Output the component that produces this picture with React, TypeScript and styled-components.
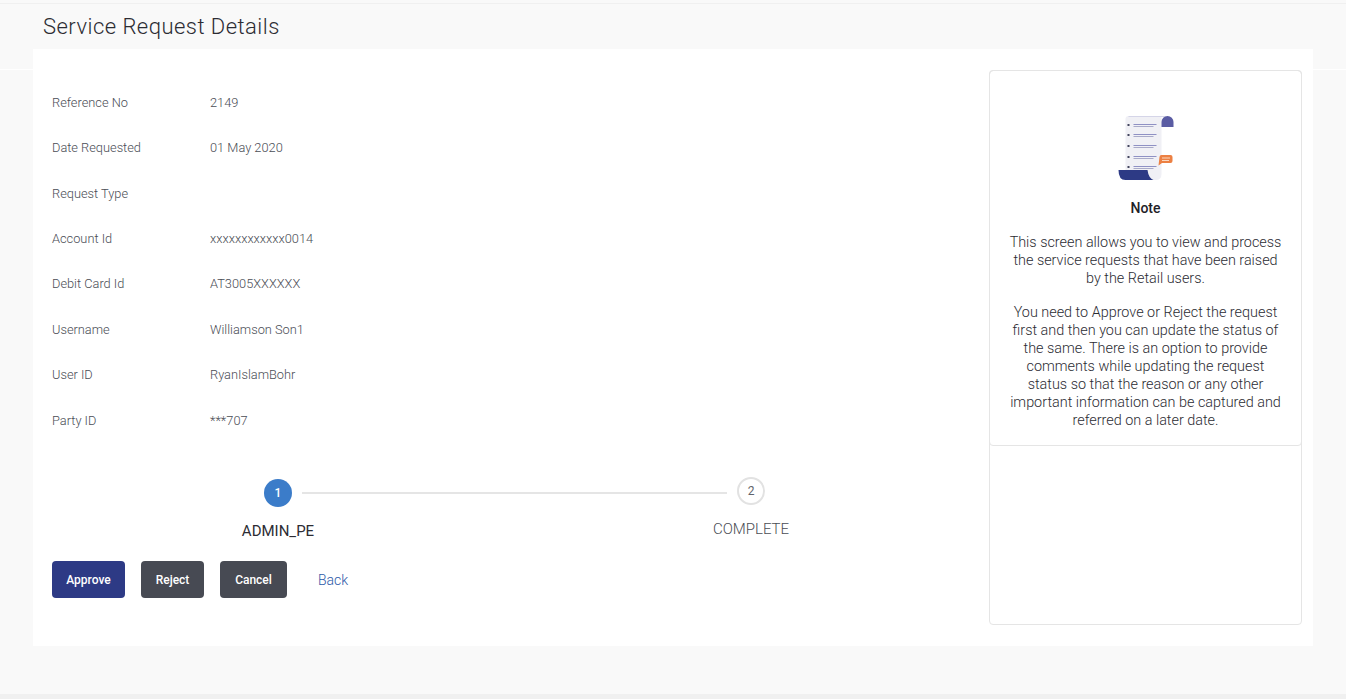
import React from "react";
import styled, { createGlobalStyle } from "styled-components";

const Global = createGlobalStyle`
  html, body { margin: 0; padding: 0; height: 100%; }
  body { font-family: Roboto, "Liberation Sans", sans-serif; font-weight: 300; background: #f9f9f9; overflow: hidden; }
`;

const Page = styled.div`
  height: 699px;
  display: flex;
  flex-direction: column;
  box-sizing: border-box;
  padding-top: 3px;
  background:
    linear-gradient(#f0f0f0, #f0f0f0) 0 3px / 100% 1px no-repeat,
    linear-gradient(#ffffff, #ffffff) 0 69px / 100% 1px no-repeat,
    #f9f9f9;
`;

const Header = styled.header`
  height: 46px;
  flex: none;
  padding-left: 43px;
  display: flex;
  align-items: center;
`;

const Title = styled.h1`
  margin: 0;
  font-size: 22px;
  font-weight: 300;
  color: #2c2c33;
  letter-spacing: 0.47px;
`;

const Panel = styled.main`
  margin: 0 33px;
  height: 597px;
  flex: none;
  background: #fff;
  display: flex;
  box-sizing: border-box;
`;

const Footer = styled.footer`
  margin-top: auto;
  height: 5px;
  flex: none;
  background: #f0f0f0;
`;

const Content = styled.section`
  width: 956px;
  flex: none;
  box-sizing: border-box;
  padding: 30.6px 0 0 19px;
`;

const Rows = styled.dl`
  margin: 0;
`;

const Row = styled.div`
  display: flex;
  height: 45.4px;
  align-items: center;
  font-size: 12.8px;
  color: #4a4d55;
`;

const Label = styled.dt`
  width: 158px;
  flex: none;
`;

const Value = styled.dd`
  margin: 0;
`;

const Stepper = styled.div`
  display: flex;
  margin: 34.2px 0 0 166px;
  width: 600px;
  align-items: flex-start;
`;

const Step = styled.div<{ $top: number }>`
  width: 120px;
  flex: none;
  display: flex;
  flex-direction: column;
  align-items: center;
  padding-top: ${(p) => p.$top}px;
`;

const Circle = styled.div<{ $active?: boolean }>`
  width: 28px;
  height: 28px;
  box-sizing: border-box;
  border-radius: 50%;
  display: flex;
  align-items: center;
  justify-content: center;
  font-size: 12px;
  font-weight: ${(p) => (p.$active ? 500 : 400)};
  color: ${(p) => (p.$active ? "#fff" : "#5f636b")};
  background: ${(p) => (p.$active ? "#3b7cc9" : "#fff")};
  border: ${(p) => (p.$active ? "none" : "2px solid #e2e2e2")};
`;

const StepLabel = styled.div<{ $active?: boolean }>`
  margin-top: 16px;
  font-size: 15px;
  line-height: 17px;
  font-weight: ${(p) => (p.$active ? 400 : 300)};
  color: ${(p) => (p.$active ? "#2c2c33" : "#4a4d55")};
  white-space: nowrap;
`;

const Connector = styled.div`
  width: 425px;
  height: 2px;
  flex: none;
  margin: 15px -36px 0 -36px;
  background: #e5e5e5;
`;

const Actions = styled.div`
  display: flex;
  align-items: center;
  margin-top: 21px;
`;

const Button = styled.button<{ $primary?: boolean; $w: number }>`
  width: ${(p) => p.$w}px;
  height: 37px;
  border: none;
  border-radius: 4px;
  margin-right: 16px;
  padding: 1px 0 0;
  font-family: inherit;
  font-size: 12px;
  font-weight: 500;
  color: #fff;
  background: ${(p) => (p.$primary ? "#2d3a85" : "#474a53")};
`;

const BackLink = styled.a`
  margin-left: 15px;
  padding-top: 2px;
  font-size: 14px;
  font-weight: 300;
  color: #2d5aa8;
`;

const Aside = styled.aside`
  width: 313px;
  height: 555px;
  margin: 21px 0 0 0;
  flex: none;
  box-sizing: border-box;
  border: 1px solid #e5e5e5;
  border-radius: 4px;
`;

const NoteCard = styled.div`
  height: 376px;
  box-sizing: border-box;
  margin: -1px -1px 0;
  border: 1px solid #e5e5e5;
  border-radius: 4px;
  padding: 41px 16px 0;
  display: flex;
  flex-direction: column;
  align-items: center;
  text-align: center;
`;

const NoteIcon = styled.svg`
  display: block;
  width: 60px;
  height: 70px;
  flex: none;
`;

const NoteTitle = styled.h2`
  margin: 17px 0 0;
  font-size: 14px;
  font-weight: 500;
  line-height: 18px;
  color: #1f2128;
`;

const NoteText = styled.p`
  margin: 17px 0 0;
  font-size: 14.4px;
  font-weight: 300;
  line-height: 18px;
  color: #2c2c33;
  & + & {
    margin-top: 16px;
  }
`;

const rows: [string, string][] = [
  ["Reference No", "2149"],
  ["Date Requested", "01 May 2020"],
  ["Request Type", ""],
  ["Account Id", "xxxxxxxxxxxx0014"],
  ["Debit Card Id", "AT3005XXXXXX"],
  ["Username", "Williamson Son1"],
  ["User ID", "RyanIslamBohr"],
  ["Party ID", "***707"],
];

const lineYs = [12, 22, 33, 44, 54];

const ScrollIcon = () => (
  <NoteIcon viewBox="0.5 0 60 70" aria-hidden="true">
    <path d="M13 4 H46 V62 Q46 68 40 68 H10 V7 Q10 4 13 4 Z" fill="#f0f0f5" />
    <path d="M13 4.5 H50" stroke="#d5d5e8" strokeWidth="1" />
    <path d="M46 15 V10 A6 6 0 0 1 58 10 V15 Z" fill="#5a5ca3" />
    {lineYs.map((y) => (
      <g key={y}>
        <rect x="12" y={y} width="2" height="2" fill="#44465f" />
        <rect x="18" y={y} width="23" height="1" fill="#8f91c4" />
        <rect x="18" y={y + 2} width="20" height="1" fill="#a9aac9" />
      </g>
    ))}
    <path d="M3 58 H32 Q33 66 38 68 H10 Q3 68 3 58 Z" fill="#2d3a85" />
    <path d="M44 45 Q44 43 46 43 H55 Q57 43 57 45 V49 Q57 51 55 51 H46.5 L43 53.5 Z" fill="#ec8043" />
    <rect x="46.5" y="45.5" width="8" height="1" fill="#fbd8c0" />
    <rect x="46.5" y="48" width="7" height="1" fill="#fbd8c0" />
  </NoteIcon>
);

export default function App() {
  return (
    <Page>
      <Global />
      <Header>
        <Title>Service Request Details</Title>
      </Header>
      <Panel>
        <Content>
          <Rows>
            {rows.map(([l, v]) => (
              <Row key={l}>
                <Label>{l}</Label>
                <Value>{v}</Value>
              </Row>
            ))}
          </Rows>
          <Stepper>
            <Step $top={2}>
              <Circle $active>1</Circle>
              <StepLabel $active>ADMIN_PE</StepLabel>
            </Step>
            <Connector />
            <Step $top={0}>
              <Circle>2</Circle>
              <StepLabel>COMPLETE</StepLabel>
            </Step>
          </Stepper>
          <Actions>
            <Button $primary $w={73}>Approve</Button>
            <Button $w={63}>Reject</Button>
            <Button $w={67}>Cancel</Button>
            <BackLink>Back</BackLink>
          </Actions>
        </Content>
        <Aside>
          <NoteCard>
            <ScrollIcon />
            <NoteTitle>Note</NoteTitle>
            <NoteText>This screen allows you to view and process the service requests that have been raised by the Retail users.</NoteText>
            <NoteText>You need to Approve or Reject the request first and then you can update the status of the same. There is an option to provide comments while updating the request status so that the reason or any other important information can be captured and referred on a later date.</NoteText>
          </NoteCard>
        </Aside>
      </Panel>
      <Footer />
    </Page>
  );
}
